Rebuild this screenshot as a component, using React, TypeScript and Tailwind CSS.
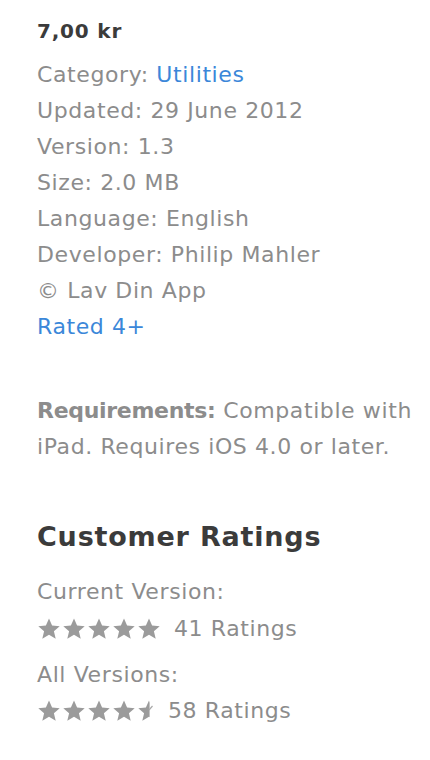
import React from "react";

function Star({ half = false }: { half?: boolean }) {
  const d =
    "M12 1.5l3.1 7.1 7.6.6-5.8 5 1.8 7.5L12 17.7l-6.7 4 1.8-7.5-5.8-5 7.6-.6z";
  if (!half) {
    return (
      <svg width="24" height="24" viewBox="0 0 24 24" className="shrink-0">
        <path d={d} fill="#9b9b9b" />
      </svg>
    );
  }
  return (
    <svg width="24" height="24" viewBox="0 0 24 24" className="shrink-0">
      <defs>
        <clipPath id="leftHalf">
          <rect x="0" y="0" width="12.6" height="24" />
        </clipPath>
      </defs>
      <path d={d} fill="#9b9b9b" clipPath="url(#leftHalf)" />
      <path d="M12 11l3.5-4" stroke="#a8a8a8" strokeWidth="1.2" />
    </svg>
  );
}

function Stars({ count, half }: { count: number; half?: boolean }) {
  return (
    <span className="flex items-center gap-[1px]">
      {Array.from({ length: count }).map((_, i) => (
        <Star key={i} />
      ))}
      {half && <Star half />}
    </span>
  );
}

const details = [
  "Updated: 29 June 2012",
  "Version: 1.3",
  "Size: 2.0 MB",
  "Language: English",
  "Developer: Philip Mahler",
  "© Lav Din App",
];

export default function App() {
  return (
    <div
      className="min-h-[760px] w-[430px] bg-white pl-[37px] pt-[13px] text-[#8c8c8c]"
      style={{ fontFamily: '"DejaVu Sans", "Liberation Sans", sans-serif' }}
    >
      <p className="text-[20px] font-bold leading-[36px] tracking-[0.8px] text-[#3b3b3b]">
        7,00 kr
      </p>

      <ul className="mt-2 text-[22px] leading-[36px] tracking-[0.6px]">
        <li>
          Category: <span className="text-[#3b87d9]">Utilities</span>
        </li>
        {details.map((item) => (
          <li key={item}>{item}</li>
        ))}
        <li className="text-[#3b87d9]">Rated 4+</li>
      </ul>

      <p className="mt-12 w-[390px] text-[22px] leading-[36px] tracking-[0.6px]">
        <b className="tracking-[-0.3px]">Requirements:</b> Compatible with
        iPad. Requires iOS 4.0 or later.
      </p>

      <h2 className="mt-[54px] text-[27px] font-bold leading-[36px] tracking-[0.8px] text-[#3b3b3b]">
        Customer Ratings
      </h2>

      <div className="mt-[19px] text-[22px] leading-[36px] tracking-[0.6px]">
        <p>Current Version:</p>
        <div className="mt-[1px] flex items-center gap-[13px]">
          <Stars count={5} />
          <span>41 Ratings</span>
        </div>
        <p className="mt-[10px]">All Versions:</p>
        <div className="flex items-center gap-[7px]">
          <Stars count={4} half />
          <span>58 Ratings</span>
        </div>
      </div>
    </div>
  );
}
